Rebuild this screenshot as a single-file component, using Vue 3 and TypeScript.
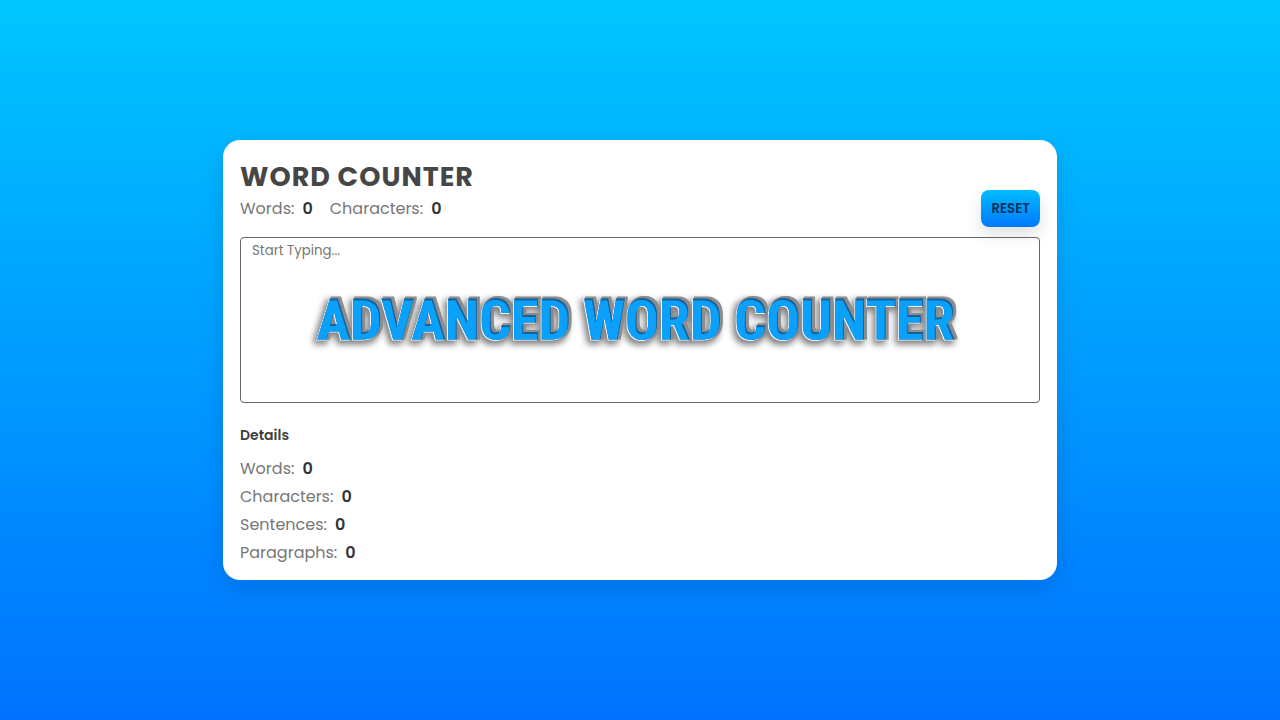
<script setup lang="ts">
import { computed, ref } from 'vue'

interface Stat {
  label: string
  value: number
}

const text = ref('')

const words = computed<number>(() => text.value.split(/\s+/).filter(Boolean).length)
const characters = computed<number>(() => text.value.length)
const sentences = computed<number>(
  () => text.value.split(/[.!?]+/).filter((part) => part.trim()).length,
)
const paragraphs = computed<number>(
  () => text.value.split(/\n+/).filter((part) => part.trim()).length,
)

const summary = computed<Stat[]>(() => [
  { label: 'Words:', value: words.value },
  { label: 'Characters:', value: characters.value },
])

const details = computed<Stat[]>(() => [
  ...summary.value,
  { label: 'Sentences:', value: sentences.value },
  { label: 'Paragraphs:', value: paragraphs.value },
])

function reset(): void {
  text.value = ''
}
</script>

<template>
  <main class="page">
    <section class="card">
      <header class="top">
        <div>
          <h1 class="title">WORD COUNTER</h1>
          <div class="summary">
            <p v-for="stat in summary" :key="stat.label" class="stat">
              <span>{{ stat.label }}</span>
              <strong>{{ stat.value }}</strong>
            </p>
          </div>
        </div>
        <button class="reset" type="button" @click="reset">RESET</button>
      </header>

      <div class="editor">
        <textarea v-model="text" class="input" aria-label="Text to count" placeholder="Start Typing..."></textarea>
        <div class="banner">ADVANCED WORD COUNTER</div>
        <!-- Bevel for the banner: soft shadow, grey side, white rim, dark inner edge, face -->
        <svg class="defs" width="0" height="0" aria-hidden="true">
          <filter id="bevel" x="0" y="0" width="100%" height="100%" color-interpolation-filters="sRGB">
            <feMorphology in="SourceAlpha" operator="dilate" radius="2" result="thick" />
            <feOffset in="thick" dx="-2" dy="3" result="thickMoved" />
            <feGaussianBlur in="thickMoved" stdDeviation="3" result="blurred" />
            <feComponentTransfer in="blurred" result="shadow">
              <feFuncA type="linear" slope="0.5" />
            </feComponentTransfer>
            <feMorphology in="SourceAlpha" operator="dilate" radius="1" result="sideShape" />
            <feOffset in="sideShape" dx="2" dy="-1" result="sideMoved" />
            <feFlood flood-color="#8c8c8e" />
            <feComposite in2="sideMoved" operator="in" result="side" />
            <feOffset in="SourceAlpha" dx="-1" dy="1" result="rimShape" />
            <feFlood flood-color="#eef8ff" />
            <feComposite in2="rimShape" operator="in" result="rim" />
            <feFlood flood-color="#14629b" />
            <feComposite in2="SourceAlpha" operator="in" result="edge" />
            <feOffset in="SourceAlpha" dx="-1" dy="2" result="faceShape" />
            <feComposite in="SourceGraphic" in2="faceShape" operator="in" result="face" />
            <feMerge>
              <feMergeNode in="shadow" />
              <feMergeNode in="side" />
              <feMergeNode in="rim" />
              <feMergeNode in="edge" />
              <feMergeNode in="face" />
            </feMerge>
          </filter>
        </svg>
      </div>

      <h2 class="subtitle">Details</h2>
      <div class="details">
        <p v-for="stat in details" :key="stat.label" class="stat">
          <span>{{ stat.label }}</span>
          <strong>{{ stat.value }}</strong>
        </p>
      </div>
    </section>
  </main>
</template>

<style>
body {
  margin: 0;
}
</style>

<style scoped>
.page {
  box-sizing: border-box;
  min-height: 100vh;
  display: flex;
  align-items: center;
  justify-content: center;
  background: linear-gradient(#00c6ff, #0072ff);
  font-family: Poppins, Inter, "Open Sans", sans-serif;
  color: #404040;
}

.card {
  width: 62.5%;
  padding: 19px 17px 13px;
  border-radius: 17px;
  background: #fff;
  box-shadow: 0 8px 24px rgba(0, 0, 0, 0.12);
}

.top {
  display: flex;
  align-items: flex-end;
  justify-content: space-between;
  padding-bottom: 10px;
}

.title {
  margin: 0;
  font-size: 27px;
  line-height: 36px;
  font-weight: 700;
  letter-spacing: 1px;
  color: #464646;
}

.summary {
  display: flex;
  gap: 17px;
  padding-bottom: 4px;
}

.stat {
  display: flex;
  gap: 8px;
  margin: 0;
  font-size: 16px;
  line-height: 28px;
  color: #777;
}

.stat strong {
  font-weight: 600;
  color: #333;
}

.reset {
  padding: 8px 10px;
  border: 0;
  border-radius: 8px;
  background: linear-gradient(#00bcff, #0078ff);
  box-shadow: 0 8px 16px rgba(0, 0, 0, 0.12);
  font-family: inherit;
  font-weight: 600;
  line-height: 21px;
  color: #0b3158;
  cursor: pointer;
}

.editor {
  position: relative;
  display: flex;
}

.input {
  box-sizing: border-box;
  width: 100%;
  height: 166px;
  padding: 3px 11px;
  border: 1px solid #666;
  border-radius: 4px;
  background: transparent;
  resize: none;
  outline: none;
  font-family: inherit;
  line-height: 20px;
  color: #404040;
}

.input::placeholder {
  color: #777;
}

.banner {
  position: absolute;
  inset: 0;
  display: flex;
  align-items: center;
  justify-content: center;
  padding-right: 8px;
  pointer-events: none;
  white-space: nowrap;
  font: 700 56px/60px "Franklin Gothic Demi Cond", "Roboto Condensed", "Open Sans Condensed", Roboto, sans-serif;
  color: #0ba1fb;
  -webkit-text-stroke: 1px #0ba1fb;
  filter: url(#bevel);
}

.defs {
  position: absolute;
}

.subtitle {
  margin: 22px 0 10px;
  font-size: 14px;
  line-height: 20px;
  font-weight: 600;
}
</style>
